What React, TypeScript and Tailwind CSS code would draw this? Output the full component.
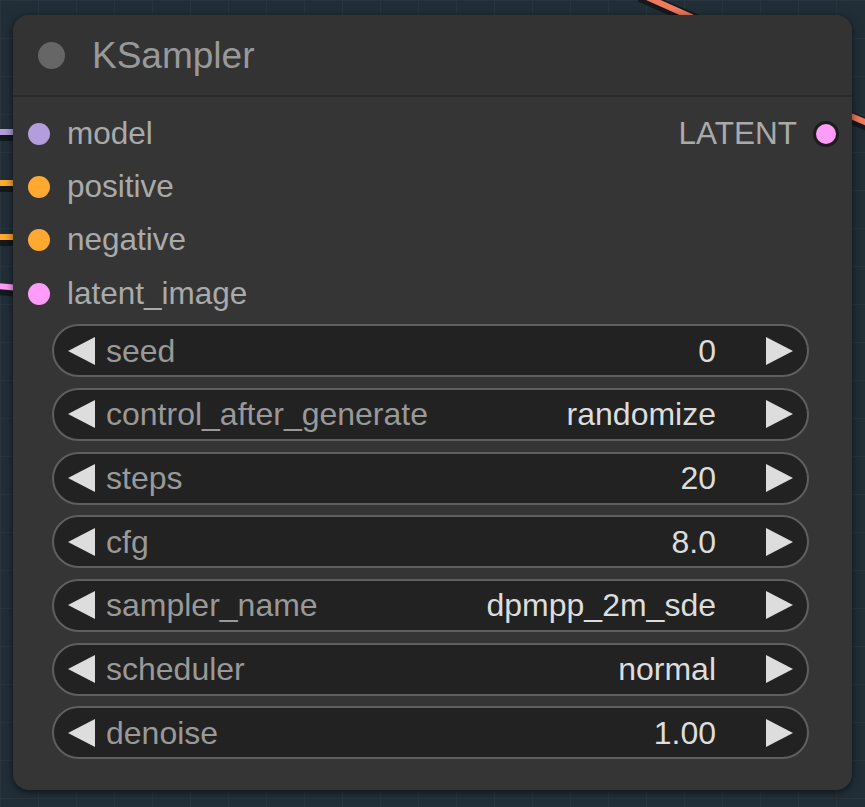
import { type ReactNode } from 'react'

const inputs = [
  { name: 'model', color: 'bg-[#b39ddb]' },
  { name: 'positive', color: 'bg-[#ffa931]' },
  { name: 'negative', color: 'bg-[#ffa931]' },
  { name: 'latent_image', color: 'bg-[#ff9cf9]' },
]

const widgets = [
  { label: 'seed', value: '0' },
  { label: 'control_after_generate', value: 'randomize' },
  { label: 'steps', value: '20' },
  { label: 'cfg', value: '8.0' },
  { label: 'sampler_name', value: 'dpmpp_2m_sde' },
  { label: 'scheduler', value: 'normal' },
  { label: 'denoise', value: '1.00' },
]

function Wires() {
  return (
    <svg className="absolute inset-0 pointer-events-none" width="865" height="807">
      <g strokeLinecap="butt" fill="none">
        <path d="M640 -4 L700 22" stroke="#14191d" strokeWidth="12" />
        <path d="M640 -6 L698 20" stroke="#f07a5e" strokeWidth="6" />
        <path d="M846 116 L870 126" stroke="#14191d" strokeWidth="12" />
        <path d="M846 114 L870 124" stroke="#f07a5e" strokeWidth="6" />
        <path d="M-4 135 L20 135" stroke="#14191d" strokeWidth="12" />
        <path d="M-4 132 L20 132" stroke="#b39ddb" strokeWidth="6" />
        <path d="M-4 186 L20 186" stroke="#14191d" strokeWidth="12" />
        <path d="M-4 183 L20 183" stroke="#ffa931" strokeWidth="6" />
        <path d="M-4 240 L20 240" stroke="#14191d" strokeWidth="12" />
        <path d="M-4 237 L20 237" stroke="#ffa931" strokeWidth="6" />
        <path d="M-4 289 L20 291" stroke="#14191d" strokeWidth="12" />
        <path d="M-4 286 L20 288" stroke="#ff9cf9" strokeWidth="6" />
      </g>
    </svg>
  )
}

function Arrow({ dir }: { dir: 'left' | 'right' }) {
  return (
    <svg width="27" height="28" viewBox="0 0 27 28" className="shrink-0">
      <polygon points={dir === 'left' ? '27,0 0,14 27,28' : '0,0 27,14 0,28'} fill="#dddddd" />
    </svg>
  )
}

function Widget({ label, value }: { label: string; value: ReactNode }) {
  return (
    <div className="flex items-center h-[53px] rounded-full border-2 border-[#5f5f5f] bg-[#222222] pl-[14px] pr-[14px] text-[32px] leading-none">
      <Arrow dir="left" />
      <span className="ml-[11px] text-[#999999]">{label}</span>
      <span className="ml-auto text-[#dddddd]">{value}</span>
      <span className="ml-[50px]">
        <Arrow dir="right" />
      </span>
    </div>
  )
}

export default function App() {
  return (
    <div
      className="relative w-[865px] h-[807px] overflow-hidden bg-[#222e37] bg-[linear-gradient(#28353f_1px,transparent_1px),linear-gradient(90deg,#28353f_1px,transparent_1px)] bg-[size:38px_38px]"
      style={{ fontFamily: '"Liberation Sans", Arial, sans-serif' }}
    >
      <Wires />
      <div className="absolute left-[13px] top-[15px] w-[839px] h-[775px] rounded-[16px] bg-[#353535] shadow-[0_2px_8px_rgba(0,0,0,0.6)] flex flex-col overflow-hidden">
        <div className="h-[82px] shrink-0 flex items-center pl-[25px] bg-[#333333] border-b-2 border-[#2a2a2a]">
          <span className="w-[27px] h-[27px] rounded-full bg-[#666666]" />
          <span className="ml-[27px] text-[37px] leading-none text-[#999999]">KSampler</span>
        </div>
        <div className="relative pt-[10px]">
          {inputs.map((s, i) => (
            <div key={s.name} className="h-[53.3px] flex items-center pl-[15px] text-[31.5px] leading-none text-[#aaaaaa]">
              <span className={`w-[22px] h-[22px] rounded-full ${s.color}`} />
              <span className="ml-[17px]">{s.name}</span>
              {i === 0 && (
                <span className="ml-auto mr-[13px] flex items-center">
                  <span>LATENT</span>
                  <span className="ml-[16px] w-[26px] h-[26px] rounded-full bg-[#ff9cf9] border-[3px] border-[#1c1c1c]" />
                </span>
              )}
            </div>
          ))}
        </div>
        <div className="mt-[4px] ml-[39px] mr-[43px] flex flex-col gap-[10.7px]">
          {widgets.map(w => (
            <Widget key={w.label} label={w.label} value={w.value} />
          ))}
        </div>
      </div>
    </div>
  )
}
